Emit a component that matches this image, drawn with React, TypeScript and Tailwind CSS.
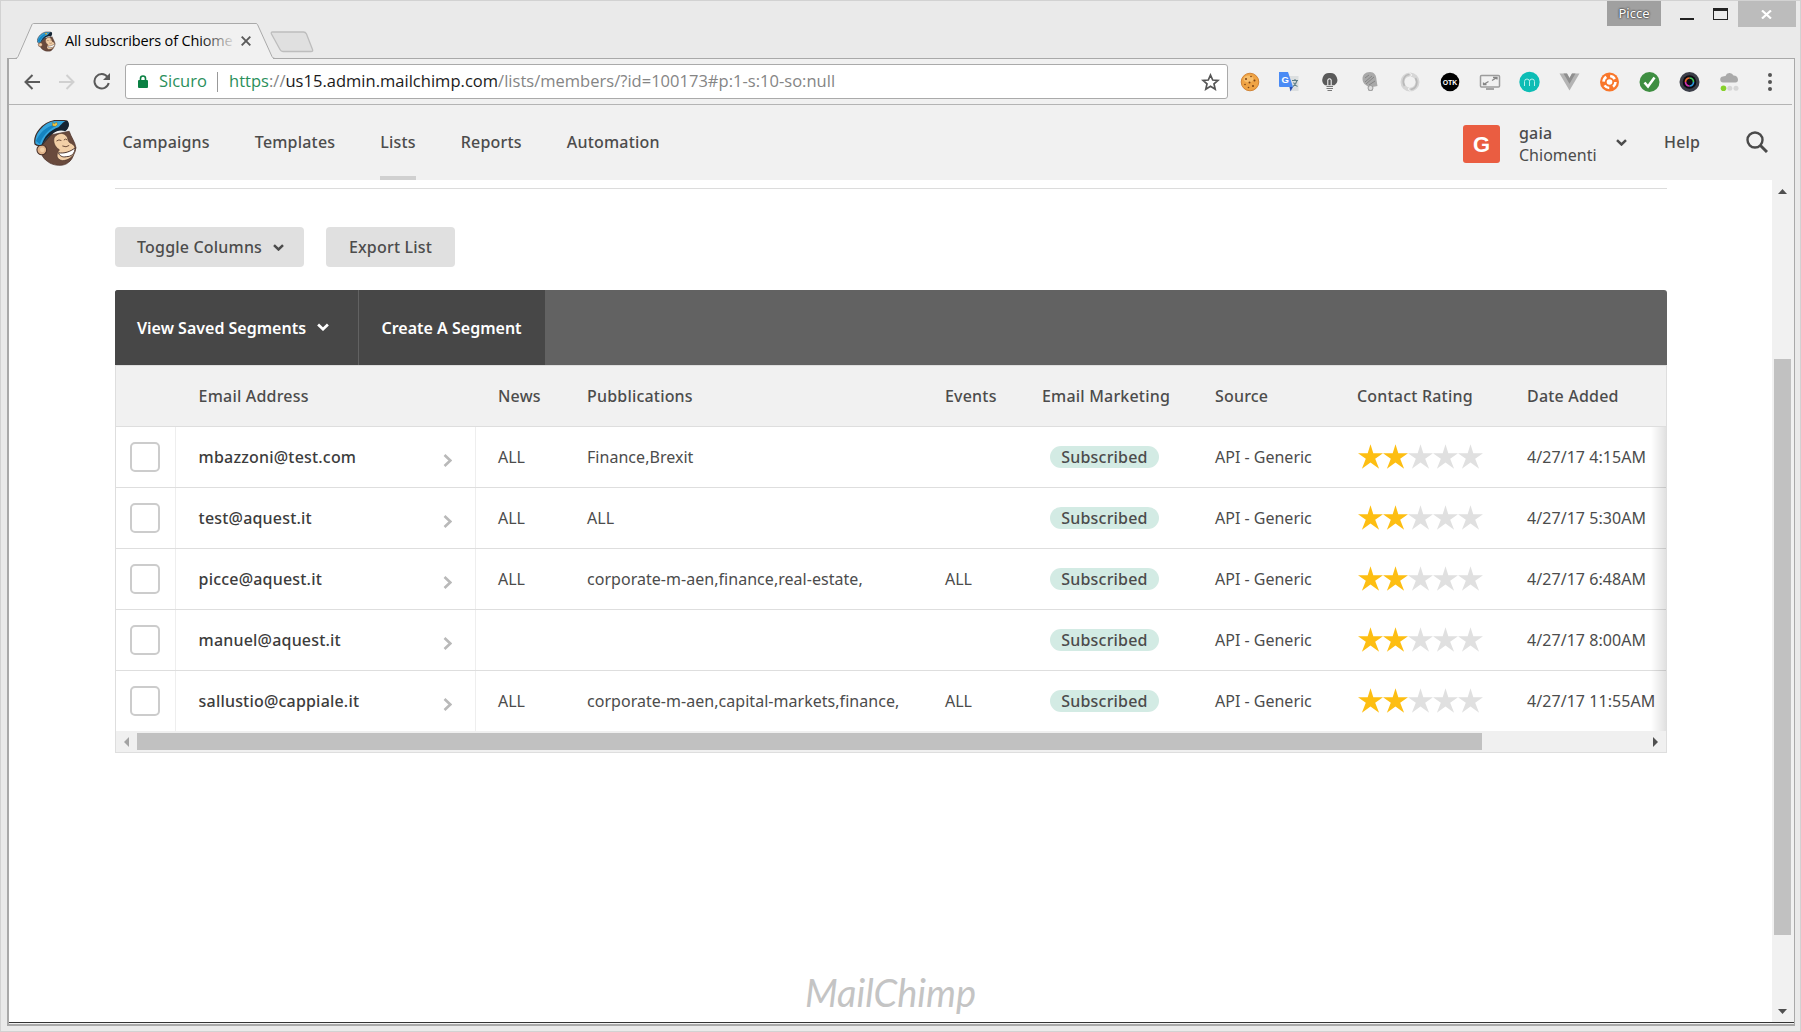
import React from 'react';

const rows = [
  { email: 'mbazzoni@test.com', news: 'ALL', pubs: 'Finance,Brexit', events: '', date: '4/27/17 4:15AM' },
  { email: 'test@aquest.it', news: 'ALL', pubs: 'ALL', events: '', date: '4/27/17 5:30AM' },
  { email: 'picce@aquest.it', news: 'ALL', pubs: 'corporate-m-aen,finance,real-estate,', events: 'ALL', date: '4/27/17 6:48AM' },
  { email: 'manuel@aquest.it', news: '', pubs: '', events: '', date: '4/27/17 8:00AM' },
  { email: 'sallustio@cappiale.it', news: 'ALL', pubs: 'corporate-m-aen,capital-markets,finance,', events: 'ALL', date: '4/27/17 11:55AM' },
];

const GRID = 'grid grid-cols-[60px_300px_89px_358px_97px_173px_142px_170px_161px]';
const MEDIUM = 'font-medium tracking-[0.012em]';

function Freddie({ className }: { className: string }) {
  return (
    <svg viewBox="0 0 45 47" className={className} aria-hidden="true">
      <path d="M8 25C5 32 8 39 14 43c6 5 17 5 21 1 5-3 6-10 8-15-1-6-5-11-7-17L16 16z" fill="#694a3d" stroke="#4a3129" strokeWidth=".7" />
      <path d="M21 18c4-5 10-5 13 0 1 3 1 5 3 6 5 2 6 6 5 9-2 5-7 9-13 9-6-1-7-6-3-11-5-3-7-9-5-13z" fill="#f2cfa7" stroke="#4a3129" strokeWidth=".6" />
      <circle cx="8" cy="31" r="5" fill="#dfb28a" stroke="#4a3129" strokeWidth="1.1" />
      <circle cx="8.500" cy="31" r="2.400" fill="#f2cfa7" />
      <path d="M25 34c6 1 12-1 17-5 0 6-4 9-9 9-4 1-7-1-8-4z" fill="#fff" stroke="#4a3129" strokeWidth="1" />
      <path d="M23 22q2.500-2 5-.5M30.500 21q2-2 3.500 0M29 27q4 2 7-.5" fill="none" stroke="#6b4a38" strokeWidth="1" />
      <path d="M1 25C-1 15 9 3 21 1l10 0c4 0 5 5 2 9-5-1-10 0-15 5L8 26c-3 1-5 1-7-1z" fill="#35a4dc" stroke="#3f2c27" strokeWidth="1.200" />
      <path d="M2 22C6 13 12 8 21 5l1 2C14 11 9 17 6 25z" fill="#1583c0" />
      <path d="M8 26c2-8 8-15 17-18 3-3 6-7 9-7 3 3 2 8-2 11-8-3-17 3-24 14z" fill="#142433" />
      <path d="M19 3l2 1.500 2-2 1 2.500-2 2-3-.5z" fill="#f5c63c" stroke="#7a5a14" strokeWidth=".4" />
    </svg>
  );
}

function Chevron({ className }: { className: string }) {
  return (
    <svg viewBox="0 0 11 7" className={className} aria-hidden="true">
      <path d="M1 1.200l4.500 4.300L10 1.200" fill="none" stroke="currentColor" strokeWidth="2.500" />
    </svg>
  );
}

function Star({ on }: { on: boolean }) {
  return (
    <svg viewBox="0 0 25 25" className={on ? 'mb-[2px] size-[25px] fill-[#fdbe12]' : 'mb-[2px] size-[25px] fill-[#e0e0e0]'} aria-hidden="true">
      <path d="M12.500.3l2.800 9H25l-7.800 5.500 3.900 10-8.600-6.200-8.600 6.200 3.900-10L0 9.300h9.700z" />
    </svg>
  );
}

function Ext({ children }: { children: React.ReactNode }) {
  return (
    <span className="flex w-10 justify-center">
      <svg viewBox="0 0 20 20" className="size-5 overflow-visible" aria-hidden="true">{children}</svg>
    </span>
  );
}

function Extensions() {
  return (
    <div className="flex items-center">
      <Ext>
        <circle cx="10" cy="10" r="8.800" fill="#efa344" stroke="#c9741f" strokeWidth=".8" />
        <ellipse cx="8.500" cy="7" rx="5" ry="3.500" fill="#f7bd6a" />
        <g fill="#7a4216"><circle cx="6" cy="7" r="1" /><circle cx="11" cy="4.500" r=".8" /><circle cx="14.500" cy="8.500" r="1" /><circle cx="9.500" cy="10.500" r="1" /><circle cx="5" cy="12.500" r=".8" /><circle cx="13" cy="14" r="1" /><circle cx="8.500" cy="15.500" r=".8" /></g>
      </Ext>
      <Ext>
        <path d="M7 4h11.500v15H10z" fill="#dcdfe0" />
        <path d="M-1 0h9l5 15H0q-1 0-1-1z" fill="#4a8bf5" />
        <path d="M9.500 15h3.500l-2.500 4.500z" fill="#2a4fb0" />
        <path d="M12 8.500h6M15 7v1.500M17 8.500q-1 4-4 6M13.500 10.500q1.500 3 4 4" fill="none" stroke="#5d7d86" strokeWidth="1.100" />
        <text x="1.500" y="11.300" fontSize="9.500" fontWeight="700" fill="#fff" fontFamily="Liberation Sans, sans-serif">G</text>
      </Ext>
      <Ext>
        <path d="M9.500 1a6.800 6.800 0 0 0-4.500 12.200h9.500A6.800 6.800 0 0 0 9.500 1z" fill="#5a5a5a" />
        <path d="M7.800 13.500V8q1.700-2.500 3.400 0v5.500" fill="none" stroke="#f1f1f1" strokeWidth="1.100" />
        <path d="M6.500 14.500h6.500M6.500 16.500h6.500M7.500 18.500h4.500" stroke="#777" strokeWidth="1.200" />
      </Ext>
      <Ext>
        <path d="M10 0c-5 0-7.500 3-7.500 7 0 2 1 4 2 5l4 3v4h4v-4l5-1-1-6C16.500 3 14 0 10 0z" fill="#a9a9a9" />
        <path d="M5 10l7-6M6 12l8-7M9 13l6-4M5 6l4-3" stroke="#858585" strokeWidth="1" />
        <circle cx="10.500" cy="16" r="2.500" fill="#ddd" stroke="#9a9a9a" />
      </Ext>
      <Ext>
        <circle cx="10" cy="10" r="7.500" fill="none" stroke="#d6d6d6" strokeWidth="4" />
        <path d="M9.500 2.500C4 3 1.500 9 4.500 14M10.500 17.500C16 17 18.500 11 15.500 6" fill="none" stroke="#b9b9b9" strokeWidth="1.600" />
        <path d="M9 .5l3 2.500-2.500 2M11 19.500l-3-2.500 2.500-2" fill="none" stroke="#f1f1f1" strokeWidth="1" />
      </Ext>
      <Ext>
        <circle cx="10" cy="10" r="9.300" fill="#000" />
        <text x="2.700" y="12.600" fontSize="7.200" fontWeight="700" textLength="14.600" lengthAdjust="spacingAndGlyphs" fill="#fff" fontFamily="Liberation Sans, sans-serif">OTK</text>
      </Ext>
      <Ext>
        <rect x="0.500" y="3.500" width="19" height="11.500" rx="1" fill="none" stroke="#9c9c9c" strokeWidth="1.500" />
        <path d="M3.500 12.500l5-3M12 8.500l5-3M13 5.500h4v2M3.500 10.500v2h3" fill="none" stroke="#858585" strokeWidth="1.300" />
        <path d="M6 17h8" stroke="#9c9c9c" strokeWidth="1.800" />
      </Ext>
      <Ext>
        <circle cx="9.500" cy="10" r="10.200" fill="#0dbdb5" />
        <path d="M4.500 14V9.500q0-2.500 2.500-2.500T9.500 9.500V14M9.500 9.500Q9.500 7 12 7t2.500 2.500V14" fill="none" stroke="#b6efec" strokeWidth="1" />
      </Ext>
      <Ext>
        <path d="M-.5 1.500h7.500L9.500 6l2.500-4.500h7.500L9.500 18.500z" fill="#b4b4b4" />
        <path d="M3.500 1.500h3.500L9.500 6l2.500-4.500h3.500L9.500 11.800z" fill="#8f8f8f" />
      </Ext>
      <Ext>
        <circle cx="9.500" cy="10" r="9.500" fill="#f9772b" />
        <circle cx="9.500" cy="10" r="6" fill="none" stroke="#fff" strokeWidth="2.600" strokeDasharray="5.400 4.020" />
        <circle cx="9.500" cy="10" r="2.800" fill="#fff" />
      </Ext>
      <Ext>
        <circle cx="9.500" cy="10" r="10" fill="#3e8e41" />
        <path d="M4.500 10.500l3.500 4 6.500-9" fill="none" stroke="#fff" strokeWidth="2.600" />
      </Ext>
      <Ext>
        <circle cx="9.500" cy="10" r="10" fill="#3b3e48" />
        <circle cx="9.500" cy="10" r="6.800" fill="#0b0b12" />
        <path d="M9.500 6A4 4 0 0 1 13.500 10" fill="none" stroke="#40c95a" strokeWidth="1.700" />
        <path d="M13.500 10A4 4 0 0 1 9.500 14" fill="none" stroke="#2b9be0" strokeWidth="1.700" />
        <path d="M9.500 14A4 4 0 0 1 5.500 10" fill="none" stroke="#d62fb0" strokeWidth="1.700" />
        <path d="M5.500 10A4 4 0 0 1 9.500 6" fill="none" stroke="#e8652c" strokeWidth="1.700" />
      </Ext>
      <Ext>
        <path d="M3.500 10.500a3 3 0 0 1-.5-6Q3.500 4 5.500 4a4.300 4.300 0 0 1 8-.5q4 0 4.500 4 0 3-2.500 3z" fill="#a9a9a9" />
        <circle cx="3.500" cy="16.200" r="2.800" fill="#86d12b" /><circle cx="9.800" cy="16.200" r="2.500" fill="#d6d6d6" /><circle cx="16" cy="16.200" r="2.500" fill="#d6d6d6" />
      </Ext>
    </div>
  );
}

function WindowChrome() {
  return (
    <div className="relative h-[57px] shrink-0">
      <svg viewBox="0 0 320 59" className="absolute -top-px -left-px h-[59px] w-[320px]" aria-hidden="true">
        <path d="M15 59L32.500 23.500H257L274 59z" fill="#f1f1f1" />
        <path d="M8 58.500h7q2 0 3-2L32 24.500q.5-1 1.500-1H256q1 0 1.500 1L272 56.500q1 2 3 2" fill="none" stroke="#a9a9a9" />
        <path d="M272.500 32h31q2 0 3 2l6 15.500q.8 2-1.500 2h-28q-2 0-3-2L271.500 34q-.8-2 1-2z" fill="#e0e0e0" stroke="#bdbdbd" strokeWidth="1.300" />
      </svg>
      <div className="absolute top-[28px] left-[36px] flex w-[220px] items-center">
        <Freddie className="h-[21px] w-[19px]" />
        <span className="relative ml-[9px] w-[168px] whitespace-nowrap [font-family:'Open_Sans',sans-serif] text-[14.500px] leading-6 tracking-[-0.15px] text-black">
          All subscribers of Chiome
          <span className="absolute inset-y-0 right-0 w-[34px] bg-linear-to-r from-[#f1f1f1]/0 to-[#f1f1f1]/90" />
        </span>
        <svg viewBox="0 0 10 10" className="ml-[8px] size-[10px]" aria-hidden="true">
          <path d="M.7.7l8.600 8.600M9.300.7L.7 9.300" stroke="#5a5a5a" strokeWidth="1.900" />
        </svg>
      </div>
      <div className="absolute top-0 right-[4px] flex items-start">
        <span className="flex h-[25px] w-[54px] items-center justify-center bg-[#a0a0a0] text-[13px] text-white [text-shadow:0_0_2px_#333,0_0_2px_#333]">Picce</span>
        <span className="mt-[17px] ml-[19px] h-[2px] w-[14px] bg-[#222]" />
        <span className="mt-[7px] ml-[19px] h-[12px] w-[15px] border border-t-[3px] border-[#222]" />
        <span className="ml-[10px] flex h-[26px] w-[58px] items-center justify-center bg-[#bcbcbc]">
          <svg viewBox="0 0 11 9" className="mr-[2px] h-[9px] w-[11px]" aria-hidden="true">
            <path d="M1 .5l9 8M10 .5l-9 8" stroke="#fff" strokeWidth="2.200" />
          </svg>
        </span>
      </div>
    </div>
  );
}

function Toolbar() {
  return (
    <div className="flex h-[45px] shrink-0 items-center bg-[#f1f1f1] pl-[15px]">
      <svg viewBox="0 0 16 16" className="size-4" aria-hidden="true"><path d="M16 8H1.500M8.500 1L1.500 8l7 7" fill="none" stroke="#5a5a5a" strokeWidth="2" /></svg>
      <svg viewBox="0 0 16 16" className="ml-[19px] size-4" aria-hidden="true"><path d="M0 8h14.500M7.500 1l7 7-7 7" fill="none" stroke="#d0d0d0" strokeWidth="2" /></svg>
      <svg viewBox="0 0 18 17" className="ml-[18px] h-[17px] w-[18px]" aria-hidden="true">
        <path d="M14.500 4A7.200 7.200 0 1 0 15.700 10" fill="none" stroke="#5a5a5a" strokeWidth="2" />
        <path d="M17 0v7h-7z" fill="#5a5a5a" />
      </svg>
      <div className="ml-[14px] flex h-[35px] w-[1103px] items-center rounded-[3px] border border-[#aaa] bg-white px-[12px] [font-family:'Open_Sans',sans-serif] text-[16.500px] whitespace-nowrap">
        <svg viewBox="0 0 10 13" className="h-[13px] w-[10px]" aria-hidden="true">
          <path d="M2.500 6V3.500a2.500 2.500 0 0 1 5 0V6" fill="none" stroke="#0b8043" strokeWidth="1.600" />
          <rect x="0" y="5" width="10" height="8" rx="1" fill="#0b8043" />
        </svg>
        <span className="ml-[11px] w-[48px] text-[#2a8f5b]">Sicuro</span>
        <span className="ml-[10px] h-5 w-px bg-[#999]" />
        <span className="ml-[11px] tracking-[0.02px] text-[#858585]">
          <span className="text-[#2a8f5b]">https</span>://<span className="text-[#1a1a1a]">us15.admin.mailchimp.com</span>/lists/members/?id=100173#p:1-s:10-so:null
        </span>
        <svg viewBox="0 0 19 18" className="mr-[-5px] ml-auto h-[18px] w-[19px]" aria-hidden="true">
          <path d="M9.500 2l2.200 5 5.300.4-4 3.500 1.200 5.300-4.700-2.900-4.700 2.900L6 10.900 2 7.400 7.300 7z" fill="none" stroke="#555" strokeWidth="1.700" />
        </svg>
      </div>
      <div className="ml-[2px]"><Extensions /></div>
      <div className="ml-[18px] flex flex-col gap-[3px]">
        <span className="size-1 rounded-full bg-[#555]" /><span className="size-1 rounded-full bg-[#555]" /><span className="size-1 rounded-full bg-[#555]" />
      </div>
    </div>
  );
}

function SiteHeader() {
  return (
    <header className="flex h-[75px] shrink-0 items-center bg-[#f1f1f1] pl-[25px] text-[#4c4c4c]">
      <Freddie className="mb-px h-[47px] w-[44px]" />
      <nav className={`ml-[44.500px] flex h-full gap-[45px] ${MEDIUM}`}>
        {['Campaigns', 'Templates', 'Lists', 'Reports', 'Automation'].map((n) => (
          <a key={n} className={n === 'Lists' ? 'h-full border-b-4 border-[#d0d0d0] leading-[74px]' : 'h-full leading-[74px]'}>{n}</a>
        ))}
      </nav>
      <div className="ml-auto flex items-center">
        <span className="mt-[2px] flex h-[38px] w-[37px] items-center justify-center rounded-[3px] bg-[#ea5d41] pt-px [font-family:'Liberation_Sans',sans-serif] text-[22px] font-bold text-white">G</span>
        <div className="mt-[2px] ml-[19px] w-[78px] leading-[22px]">
          <div className={MEDIUM}>gaia</div>
          <div>Chiomenti</div>
        </div>
        <Chevron className="ml-[19px] h-[7px] w-[11px]" />
        <span className={`mb-[2px] ml-[37px] w-[36px] ${MEDIUM}`}>Help</span>
        <svg viewBox="0 0 22 22" className="mr-[26px] mb-[2px] ml-[46px] size-[22px]" aria-hidden="true">
          <circle cx="9" cy="9" r="7.500" fill="none" stroke="#4a4a4a" strokeWidth="2.400" />
          <path d="M14.200 14.200L21 21" stroke="#4a4a4a" strokeWidth="3" />
        </svg>
      </div>
    </header>
  );
}

function MemberTable() {
  return (
    <div className="mt-[23px] w-[1552px] text-[#4c4c4c]">
      <div className="flex h-[75px] overflow-hidden rounded-t-[3px] bg-[#626262] font-semibold text-white">
        <button className="flex w-[243px] items-center bg-[#474747] pl-[22px]">View Saved Segments<Chevron className="mb-[2px] ml-[11px] h-[8px] w-[12px]" /></button>
        <button className="w-[187px] border-l border-[#626262] bg-[#474747] pl-[22.500px] text-left">Create A Segment</button>
      </div>
      <div className="border border-[#dedede]">
        <div className={`${GRID} h-[61px] items-center border-b border-[#dedede] bg-[#f1f1f1] *:pl-[22px] ${MEDIUM}`}>
          <span /><span className="ml-[0.600px]">Email Address</span><span>News</span><span>Pubblications</span><span>Events</span><span>Email Marketing</span><span>Source</span><span>Contact Rating</span><span>Date Added</span>
        </div>
        <div className="relative">
          {rows.map((r, i) => (
            <div key={r.email} className={i < 4 ? `${GRID} h-[61px] border-b border-[#dedede] whitespace-nowrap` : `${GRID} h-[60px] whitespace-nowrap`}>
              <span className="flex items-center border-r border-[#eee] pl-[14px]"><span className="size-[30px] rounded-[5px] border-2 border-[#ccc] bg-white" /></span>
              <span className={`flex items-center justify-between border-r border-[#eee] pr-[23px] pl-[22.600px] text-[#3c3c3c] ${MEDIUM}`}>
                {r.email}
                <svg viewBox="0 0 9 13" className="mt-[6px] h-[13px] w-[9px]" aria-hidden="true"><path d="M1.500 1L7.300 6.500 1.500 12" fill="none" stroke="#b9b9b9" strokeWidth="2.600" /></svg>
              </span>
              <span className="flex items-center pl-[22px]">{r.news}</span>
              <span className="flex items-center pl-[22px] tracking-[0.035px]">{r.pubs}</span>
              <span className="flex items-center pl-[22px]">{r.events}</span>
              <span className="flex items-center pl-[30px]"><span className={`flex h-[22px] w-[109px] items-center justify-center rounded-full bg-[#d3ebe4] ${MEDIUM}`}>Subscribed</span></span>
              <span className="flex items-center pl-[22px]">{'API - Generic'}</span>
              <span className="flex items-center pl-[22.500px]">{[0, 1, 2, 3, 4].map((s) => <Star key={s} on={s < 2} />)}</span>
              <span className="flex items-center pl-[22px] tracking-[0.06px]">{r.date}</span>
            </div>
          ))}
          <div className="absolute inset-y-0 right-0 w-[15px] bg-linear-to-r from-transparent to-black/12" />
        </div>
        <div className="flex h-[21px] items-center bg-[#f0f0f0]">
          <svg viewBox="0 0 5 10" className="ml-[8px] h-[10px] w-[5px]" aria-hidden="true"><path d="M5 0v10L0 5z" fill="#a3a3a3" /></svg>
          <span className="ml-[8px] h-[17px] w-[1345px] bg-[#c1c1c1]" />
          <svg viewBox="0 0 5 10" className="mr-[8px] ml-auto h-[10px] w-[5px]" aria-hidden="true"><path d="M0 0v10l5-5z" fill="#505050" /></svg>
        </div>
      </div>
    </div>
  );
}

export default function App() {
  return (
    <div className="flex h-[1032px] w-[1801px] flex-col overflow-hidden border border-[#d2d2d2] bg-[#eaeaea] [font-family:'Noto_Sans',sans-serif] text-[16px]">
      <WindowChrome />
      <div className="relative z-0 ml-[6px] flex h-[968px] w-[1788px] flex-col border-t border-r border-b-2 border-l-2 border-[#a9a9a9] bg-[#f1f1f1]">
        <div className="absolute -top-px left-[8px] z-10 h-px w-[256px] bg-[#f1f1f1]" />
        <Toolbar />
        <div className="mr-[2px] h-px shrink-0 bg-[#b4b4b4]" />
        <SiteHeader />
        <div className="flex min-h-0 flex-1">
          <main className="flex w-[1763px] flex-col bg-white pl-[106px]">
            <div className="mt-[8px] h-px w-[1552px] shrink-0 bg-[#dcdcdc]" />
            <div className={`mt-[38px] flex h-[40px] shrink-0 gap-[22px] text-[#4c4c4c] ${MEDIUM}`}>
              <button className="flex w-[189px] items-center rounded-[4px] bg-[#e0e0e0] pl-[22px]">Toggle Columns<Chevron className="ml-[11px] h-[7px] w-[11px]" /></button>
              <button className="w-[129px] rounded-[4px] bg-[#e0e0e0]">Export List</button>
            </div>
            <MemberTable />
            <div className="mt-[211px] -ml-[106px] w-[1763px] text-center [font-family:Lato,sans-serif] text-[38px] leading-[56px] text-[#c4c4c4] italic">MailChimp</div>
          </main>
          <div className="flex w-[20px] flex-col items-center bg-[#f1f1f1]">
            <svg viewBox="0 0 9 5" className="mt-[9px] h-[5px] w-[9px] shrink-0" aria-hidden="true"><path d="M0 5h9L4.500 0z" fill="#505050" /></svg>
            <div className="mt-[165px] h-[576px] w-[17px] bg-[#c1c1c1]" />
            <svg viewBox="0 0 9 5" className="mt-auto mb-[8px] h-[5px] w-[9px] shrink-0" aria-hidden="true"><path d="M0 0h9L4.500 5z" fill="#505050" /></svg>
          </div>
        </div>
        <div className="h-px shrink-0 bg-[#333]" />
        <div className="h-px shrink-0 bg-[#f1f1f1]" />
      </div>
    </div>
  );
}
